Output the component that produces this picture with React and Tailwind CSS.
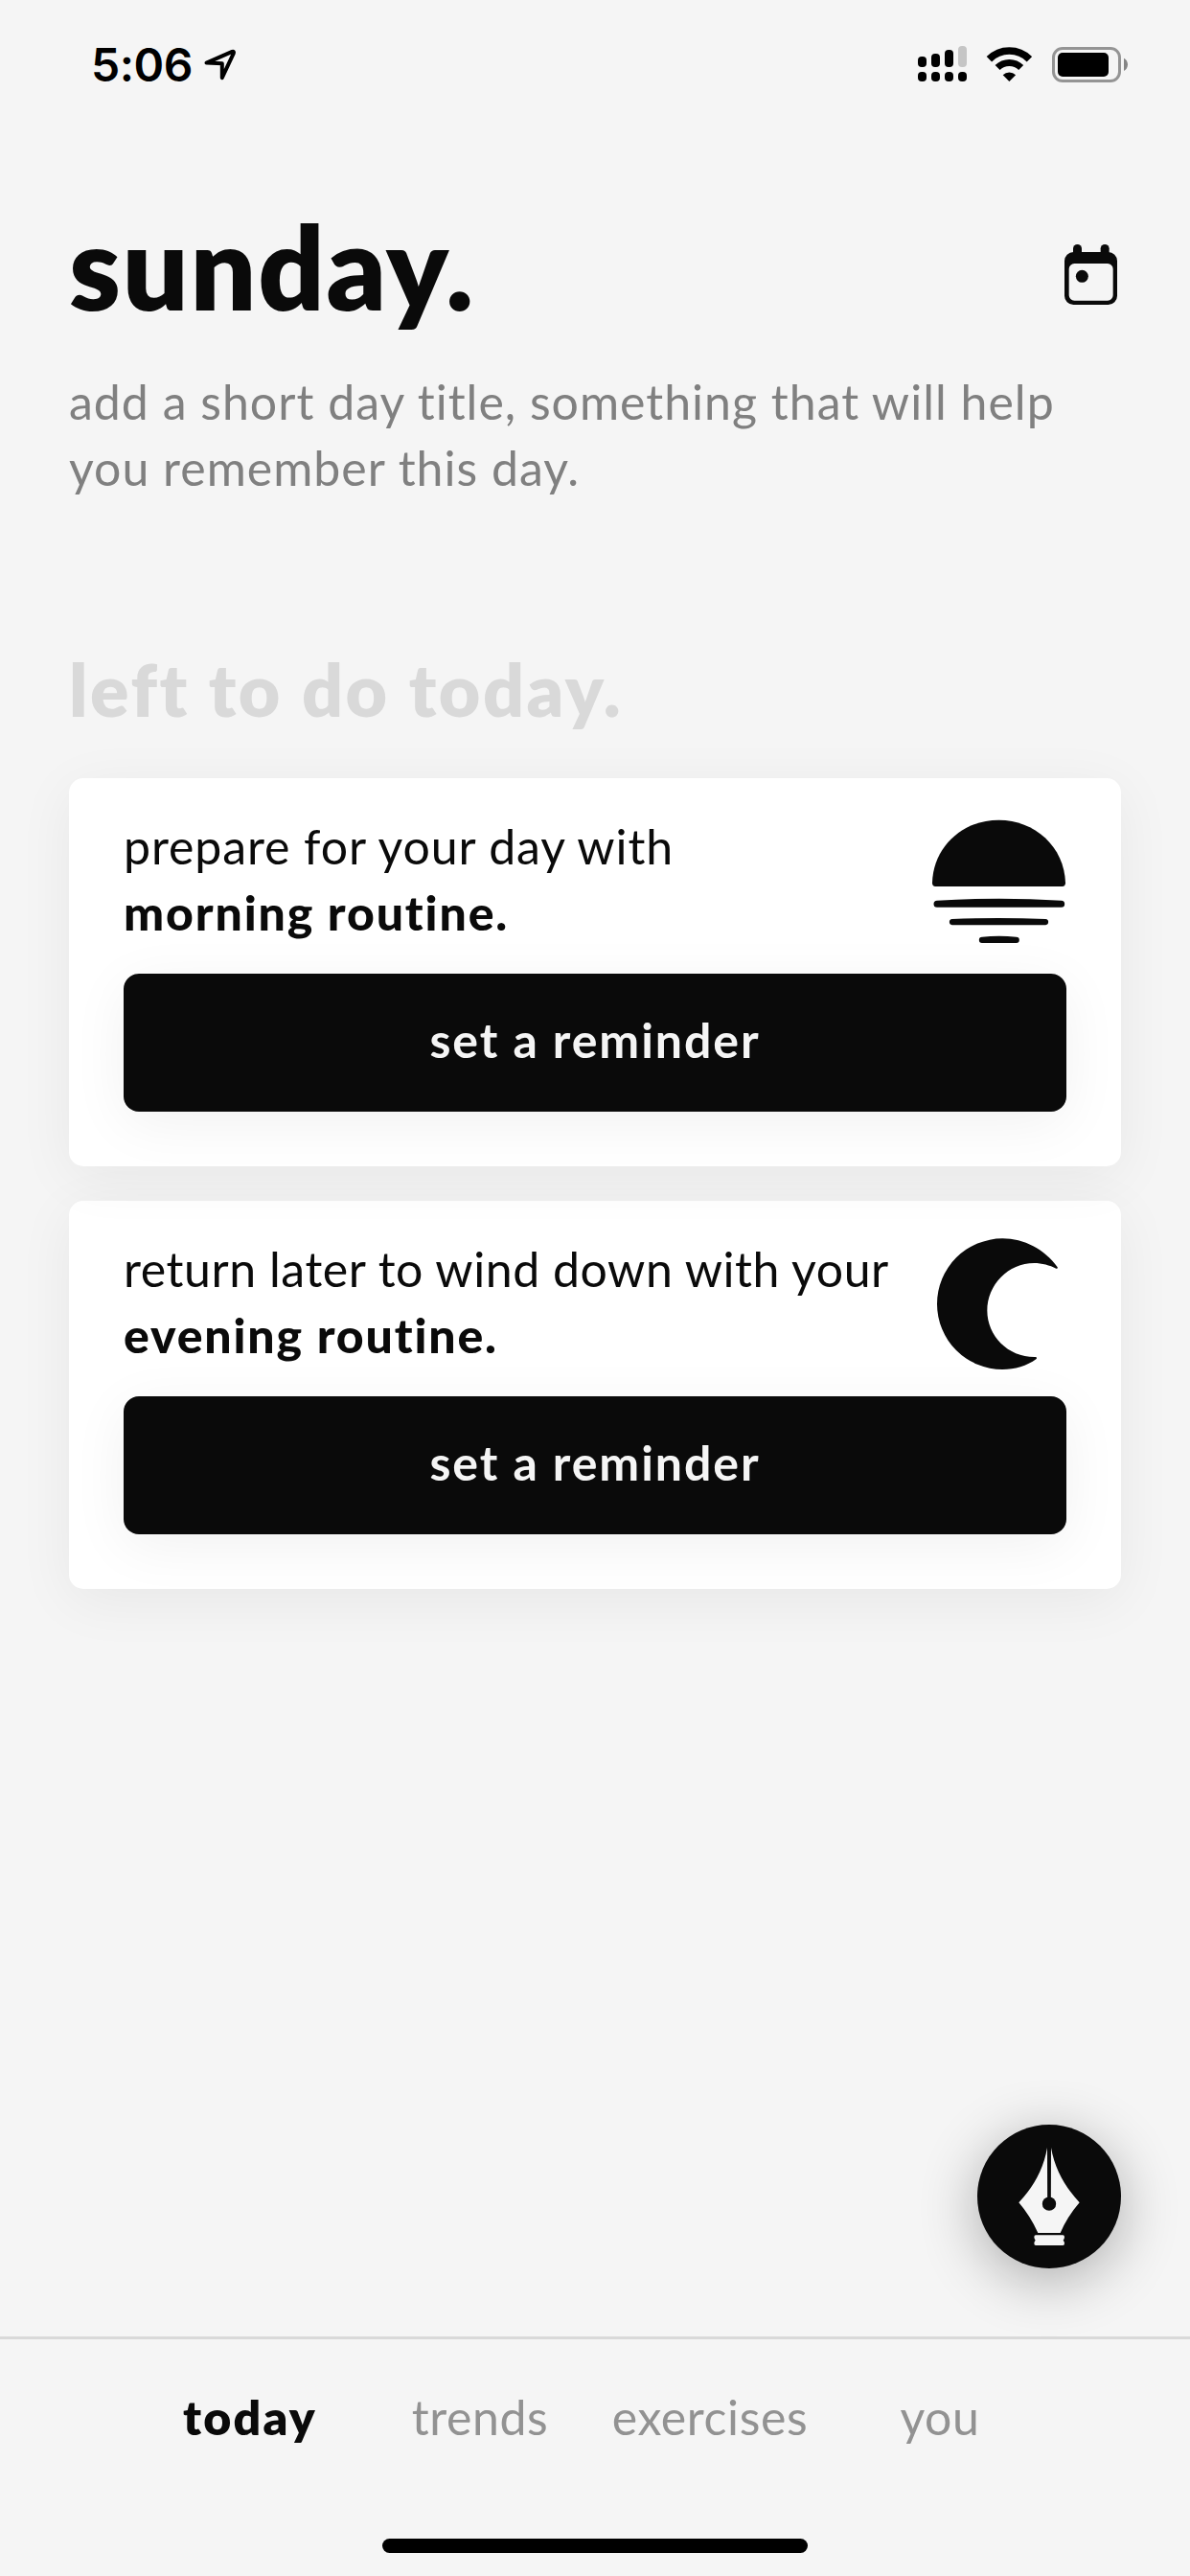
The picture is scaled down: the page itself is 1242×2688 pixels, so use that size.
import React, { useState } from 'react'

const SignalIcon = () => (
  <svg viewBox="958 48 51 40" className="h-10 w-[51px]">
    <rect x="958" y="59" width="9" height="11" rx="4" />
    <rect x="972" y="56" width="9" height="14" rx="4" />
    <rect x="986" y="52" width="9" height="18" rx="4" />
    <rect x="1000" y="48" width="9" height="22" rx="4" fill="#c5c5c5" />
    <rect x="958" y="75" width="9" height="10" rx="4" />
    <rect x="972" y="75" width="9" height="10" rx="4" />
    <rect x="986" y="75" width="9" height="10" rx="4" />
    <rect x="1000" y="75" width="9" height="10" rx="4" />
  </svg>
)

const WifiIcon = () => (
  <svg viewBox="1029 48 48 40" className="h-10 w-12">
    <g fill="none" stroke="#000">
      <path d="M1032.4 61.8a29.6 29.6 0 0 1 42 0" strokeWidth="7.6" />
      <path d="M1041.1 70.6a17.4 17.4 0 0 1 24.6 0" strokeWidth="7" />
    </g>
    <path d="M1046.7 78.2a9.6 9.6 0 0 1 13.4 0l-6.7 6.8z" />
  </svg>
)

const BatteryIcon = () => (
  <svg viewBox="1097 48 81 40" className="h-10 w-[81px]">
    <rect x="1099.5" y="50.5" width="69" height="34" rx="9.5" fill="none" stroke="#949494" strokeWidth="3" />
    <rect x="1104" y="55" width="53" height="25" rx="5" />
    <path d="M1173 60.7c5.3 2.4 5.3 10.9 0 13.3z" fill="#858585" />
  </svg>
)

const LocationIcon = () => (
  <svg viewBox="212 50 36 36" className="mt-[50px] size-9">
    <path
      d="M215.5 65.6L242.3 53.9Q244.6 53.3 243.8 55.6L231.8 81.2V66.3z"
      fill="none"
      stroke="#000"
      strokeWidth="4"
      strokeLinejoin="round"
    />
  </svg>
)

const CalendarIcon = () => (
  <svg viewBox="93 75 165 189" className="mt-[37px] mr-1 h-[63px] w-[55px]" fill="#0a0a0a">
    <rect x="120" y="75" width="27" height="45" rx="13" />
    <rect x="206" y="75" width="27" height="45" rx="13" />
    <path
      fillRule="evenodd"
      d="M121 99h109a28 28 0 0 1 28 28v109a28 28 0 0 1-28 28H121a28 28 0 0 1-28-28V127a28 28 0 0 1 28-28zM124 135a17 17 0 0 0-17 17v82a17 17 0 0 0 17 17h104a17 17 0 0 0 17-17v-82a17 17 0 0 0-17-17z"
    />
    <circle cx="148" cy="175" r="19.5" />
  </svg>
)

const SunIcon = () => (
  <svg viewBox="87 84 432 432" className="size-36 shrink-0" fill="#0a0a0a">
    <path d="M99 304C102 190 196 107 307.500 107S513 190 516 304Q516 315 506 315H109Q99 315 99 304z" />
    <path d="M114 359.500Q309 347 503 359.500A10.500 10.500 0 0 1 503 380.500H114A10.500 10.500 0 0 1 114 359.500z" />
    <path d="M161 417Q307 411 454 417A9.300 9.300 0 0 1 454 435.500H161A9.300 9.300 0 0 1 161 417z" />
    <path d="M255 473Q308 467 362 473A9.500 9.500 0 0 1 362 492H255A9.500 9.500 0 0 1 255 473z" />
  </svg>
)

const MoonIcon = () => (
  <svg viewBox="87 87 432 432" className="size-36 shrink-0" fill="#0a0a0a">
    <path d="M491 187C451 131 386 97 319 97A205 205 0 1 0 319 507C357 507 396 496 424 475Q429 470 423 468C338 470 271 402 271 323C271 242 337 174 418 174C442 174 467 181 487 191Q493 192 491 187z" />
  </svg>
)

const PenIcon = () => (
  <svg viewBox="120 111 450 450" className="size-full">
    <path d="M339 183C327 254 293 309 250 355Q286 397 310 450H380Q402 399 440 355C398 309 363 254 351 183L350 340H340z" fill="#f5f5f5" />
    <path d="M345 185V345" stroke="#0a0a0a" strokeWidth="9" />
    <circle cx="345" cy="359" r="21.500" fill="#0a0a0a" />
    <path d="M303 457H388Q393 457 393 463Q393 469 389 473Q393 477 393 483Q393 489 388 489H303Q298 489 298 483Q298 477 302 473Q298 469 298 463Q298 457 303 457z" fill="#f5f5f5" />
  </svg>
)

const RoutineCard = ({ intro, title, icon, className, introClass }) => (
  <div className={`rounded-[15px] bg-white px-[57px] pt-9 pb-[57px] shadow-[0_12px_60px_rgba(0,0,0,0.06)] ${className}`}>
    <div className="flex h-[138px] justify-between">
      <div className="mt-px text-[50px] leading-[69px] whitespace-nowrap">
        <p className={introClass}>{intro}</p>
        <p className="font-black tracking-[1.85px]">{title}</p>
      </div>
      {icon}
    </div>
    <button className="mt-[30px] flex h-36 w-full items-center justify-center rounded-[16px] bg-[#0a0a0a] pb-[5px] text-[50px] font-bold tracking-[1.95px] text-[#f5f5f5] shadow-[0_12px_60px_rgba(0,0,0,0.06)]">
      set a reminder
    </button>
  </div>
)

const tabs = ['today', 'trends', 'exercises', 'you']

export default function App() {
  const [active, setActive] = useState('today')

  return (
    <div className="flex h-[2688px] w-[1242px] flex-col overflow-hidden bg-[#f5f5f5] font-['Lato',sans-serif] text-[#0a0a0a]">

      {/* Status bar */}
      <div className="flex h-[132px] items-start pr-16 pl-[95px] text-black">
        <span className="mt-11 w-[117px] font-['Inter',sans-serif] text-[48px] leading-[48px] font-semibold tracking-[-0.5px]">5:06</span>
        <LocationIcon />
        <div className="mt-12 ml-auto flex gap-5">
          <SignalIcon />
          <WifiIcon />
          <BatteryIcon />
        </div>
      </div>

      <main className="flex flex-1 flex-col px-[72px] pt-[86px]">
        {/* Day title */}
        <div className="flex items-start justify-between">
          <h1 className="text-[121px] leading-[120px] font-extrabold tracking-[1.8px]">sunday.</h1>
          <CalendarIcon />
        </div>
        <p className="mt-[47px] text-[50px] leading-[69px] tracking-[1px] text-[#808080]">
          add a short day title, something that will help
          <br />
          you remember this day.
        </p>

        {/* Routines */}
        <h2 className="mt-[158px] text-[75px] leading-[76px] font-extrabold tracking-[2.6px] text-[#d9d9d9]">left to do today.</h2>
        <div className="mt-[55px] flex flex-col gap-9">
          <RoutineCard
            intro="prepare for your day with"
            introClass="tracking-[0.9px]"
            title="morning routine."
            icon={<SunIcon />}
            className="relative z-10"
          />
          <RoutineCard
            intro="return later to wind down with your"
            introClass="tracking-[0.55px]"
            title="evening routine."
            icon={<MoonIcon />}
            className=""
          />
        </div>

        {/* Write button */}
        <button className="mt-auto mb-[71px] size-[150px] self-end rounded-full bg-[#0a0a0a] shadow-[0_12px_60px_rgba(0,0,0,0.3)]">
          <PenIcon />
        </button>
      </main>

      {/* Bottom tabs */}
      <nav className="h-[250px] border-t-[3px] border-[#d9d9d9] pt-[51px]">
        <div className="mx-auto grid w-[960px] grid-cols-4 text-[50px] leading-[60px]">
          {tabs.map((tab) => (
            <button
              key={tab}
              onClick={() => setActive(tab)}
              className={tab === active ? 'font-extrabold tracking-[2.3px]' : 'tracking-[0.6px] text-[#929292]'}
            >
              {tab}
            </button>
          ))}
        </div>
        <div className="mx-auto mt-[97px] h-[15px] w-[444px] rounded-full bg-black" />
      </nav>
    </div>
  )
}
